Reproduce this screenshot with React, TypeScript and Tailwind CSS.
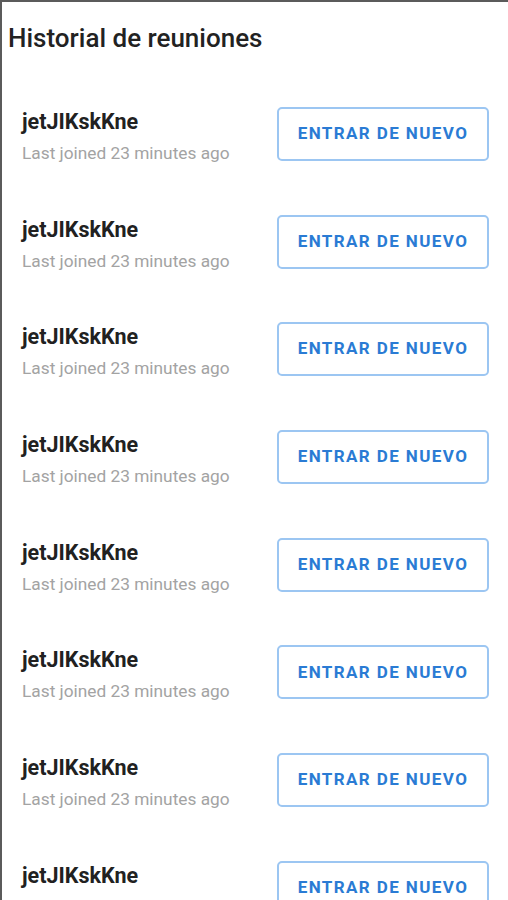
import React from 'react'

const meetings = Array.from({ length: 8 }, () => ({
    name: 'jetJIKskKne',
    when: 'Last joined 23 minutes ago',
}))

const App: React.FC = () => {
    return (
        <div
            className="h-[900px] w-[508px] overflow-hidden border-l-2 border-t-2 border-[#5b5b5b] bg-white"
            style={{ fontFamily: 'Roboto, "Noto Sans", sans-serif' }}
        >
            <div className="h-[78px] pl-[6px] pt-[20px]">
                <h1 className="text-[26px] font-medium leading-[32px] text-[#222222]">
                    Historial de reuniones
                </h1>
            </div>
            {meetings.map((m, i) => (
                <div
                    key={i}
                    className="flex h-[107.7px] items-center justify-between pl-[20px] pr-[19px]"
                >
                    <div className="mt-[5px] flex flex-col gap-[7px]">
                        <p className="text-[21.5px] font-bold leading-[26px] text-[#212121]">
                            {m.name}
                        </p>
                        <p className="whitespace-nowrap text-[17.3px] leading-[22px] text-[#a3a3a3]">
                            {m.when}
                        </p>
                    </div>
                    <button className="flex h-[54px] w-[212px] shrink-0 items-center justify-center rounded-[5px] border-2 border-[#9cc6f2] text-[17px] font-bold tracking-[1.4px] text-[#2a7bd4]">
                        ENTRAR DE NUEVO
                    </button>
                </div>
            ))}
        </div>
    )
}

export default App
